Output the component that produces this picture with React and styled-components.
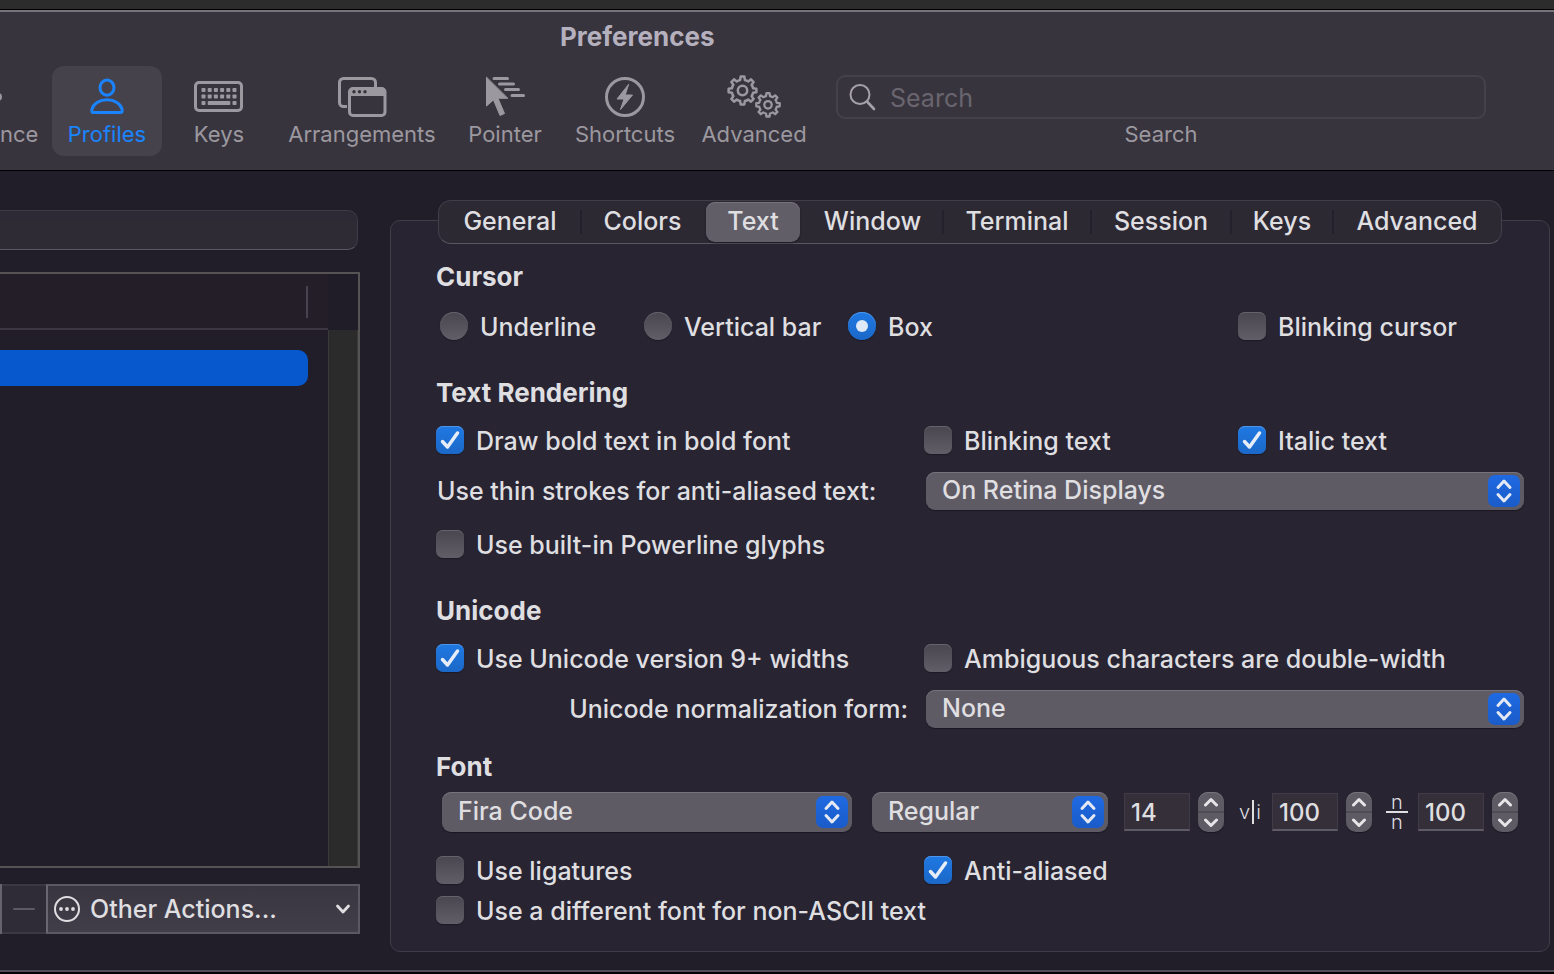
import React from "react";
import styled, { createGlobalStyle, css } from "styled-components";

const GlobalStyle = createGlobalStyle`
  *, *::before, *::after { box-sizing: border-box; }
  body {
    margin: 0;
    background: #000;
    color: #dfdee0;
    font-family: Inter, "Liberation Sans", sans-serif;
    font-size: 25px;
    font-weight: 500;
    line-height: 32px;
  }
  button, input, select { font: inherit; color: inherit; margin: 0; }
`;

/* ---------- window frame ---------- */

const Page = styled.div`
  display: flex;
  flex-direction: column;
  min-height: 100vh;
  overflow: hidden;
`;

const Backdrop = styled.div`
  height: 9px;
  background: #2c2c2c;
`;

const Window = styled.main`
  display: flex;
  flex-direction: column;
  flex: 1;
  margin: 1px 0 2px;
  border-top: 2px solid #77747b;
  border-bottom: 2px solid #4f4b58;
  background: #211d29;
`;

const Header = styled.header`
  height: 159px;
  border-bottom: 1px solid #000;
  background: #38343e;
`;

const Title = styled.h1`
  margin: 0;
  padding: 9px 0 0 560px;
  font-size: 26px;
  line-height: 32px;
  font-weight: 700;
  color: #b5b0bd;
`;

/* ---------- toolbar ---------- */

const Toolbar = styled.nav`
  display: flex;
  align-items: flex-start;
  margin-top: 13px;
`;

const ToolButton = styled.button`
  display: flex;
  flex-direction: column;
  align-items: center;
  flex: none;
  width: ${(p) => p.$width}px;
  height: 90px;
  padding: 7px 0 0;
  border: 0;
  border-radius: 12px;
  background: ${(p) => (p.$active ? "#46424c" : "transparent")};
  color: ${(p) => (p.$active ? "#1a84ff" : "#9c989f")};
  font-size: 22px;
  font-weight: 400;
  line-height: 28px;
  ${(p) =>
    p.$clipped &&
    css`
      align-items: flex-start;
    `}
`;

const ToolIcon = styled.svg`
  width: 56px;
  height: 48px;
  margin-bottom: -1px;
  fill: none;
  stroke: currentColor;
  stroke-width: 3;
  stroke-linecap: round;
  stroke-linejoin: round;
`;

const SearchTool = styled.label`
  display: flex;
  flex-direction: column;
  flex: 1;
  margin: 9px 68px 0 16px;
  font-size: 22px;
  font-weight: 400;
  line-height: 28px;
  text-align: center;
  color: #9c989f;
`;

const SearchBox = styled.span`
  display: flex;
  align-items: center;
  gap: 14px;
  height: 44px;
  margin-bottom: 1px;
  padding-left: 11px;
  border: 2px solid #45414b;
  border-radius: 9px;

  svg {
    flex: none;
    width: 27px;
    height: 28px;
    fill: none;
    stroke: #a5a1a8;
    stroke-width: 2;
    stroke-linecap: round;
  }
`;

const SearchInput = styled.input`
  flex: 1;
  min-width: 0;
  padding: 2px 0 0;
  border: 0;
  outline: 0;
  background: transparent;
  font-size: 25px;
  &::placeholder { color: #69656e; opacity: 1; }
`;

/* ---------- profile list ---------- */

const Body = styled.div`
  display: flex;
  flex: 1;
  gap: 30px;
  padding: 0 4px 18px 0;
`;

const Sidebar = styled.aside`
  display: flex;
  flex-direction: column;
  flex: none;
  width: 360px;
  padding: 39px 0 18px;
`;

const FilterInput = styled.input`
  width: 358px;
  height: 40px;
  padding: 0 12px;
  border: 1px solid #3d3945;
  border-left: 0;
  border-bottom-color: #5a5662;
  border-radius: 0 10px 10px 0;
  outline: 0;
  background: linear-gradient(#2c2835, #2f2b35 30%);
`;

const ProfileTable = styled.div`
  display: grid;
  grid-template: 56px 1fr / 1fr 30px;
  flex: 1;
  margin: 22px 0 16px;
  border: 2px solid #565354;
  border-left: 0;
`;

const ProfileHeader = styled.div`
  display: flex;
  justify-content: flex-end;
  padding: 12px 20px 10px 0;
  border-bottom: 2px solid #3b3641;
  background: #241e29;
`;

const ColumnHandle = styled.span`
  width: 2px;
  background: #48434e;
`;

const HeaderCorner = styled.div`
  background: #201d28;
`;

const ProfileRows = styled.div`
  padding: 20px 20px 0 0;
`;

const SelectedProfile = styled.div`
  height: 36px;
  border-radius: 0 10px 10px 0;
  background: #0758cd;
`;

const ScrollTrack = styled.div`
  border: 1px solid #3b3a3b;
  border-width: 0 1px;
  background: #2b2b2b;
`;

const ActionBar = styled.div`
  display: flex;
  height: 50px;
  border-left: 2px solid #67636c;
`;

const RemoveButton = styled.button`
  display: flex;
  align-items: center;
  justify-content: center;
  width: 44px;
  padding: 0;
  border: 2px solid #3b3743;
  border-width: 2px 0;
  background: #302c37;

  svg { width: 22px; height: 4px; stroke: #5d5963; stroke-width: 2; stroke-linecap: round; }
`;

const ActionsButton = styled.button`
  display: flex;
  align-items: center;
  gap: 9px;
  flex: 1;
  padding: 0 7px 0 5px;
  border: 2px solid #5c5863;
  border-left-color: #6b6771;
  background: linear-gradient(#3a3640, #423e49);

  span { flex: 1; text-align: left; }
  svg { flex: none; fill: none; stroke: currentColor; stroke-linecap: round; stroke-linejoin: round; }
`;

/* ---------- settings panel ---------- */

const Panel = styled.section`
  flex: 1;
  min-width: 0;
  margin-top: 49px;
  border: 1px solid #403c48;
  border-radius: 10px;
  background: #282431;
`;

const Tabs = styled.div`
  display: flex;
  height: 44px;
  margin: -21px 47px 0;
  padding: 1px 0;
  border: 1px solid #423e49;
  border-bottom-color: #5a5662;
  border-radius: 13px;
  background: #2d2933;
`;

const TabCell = styled.div`
  display: flex;
  flex: ${(p) => p.$share} 1 ${(p) => p.$share}px;
  align-items: center;
  padding: 0 2px;

  &::after {
    content: "";
    width: 2px;
    height: 24px;
    margin: 0 -3px 0 1px;
    background: ${(p) => (p.$divider ? "#25212c" : "transparent")};
  }
`;

const Tab = styled.button`
  flex: 1;
  height: 40px;
  padding: 0 0 2px;
  border: 0;
  border-radius: 9px;
  background: transparent;
  white-space: nowrap;
  ${(p) =>
    p.$active &&
    css`
      background: #625e68;
      box-shadow: inset 0 1px #77737b, 0 1px 2px #1b1823;
    `}
`;

const Form = styled.form`
  padding: 17px 25px 24px 45px;
`;

const Heading = styled.h2`
  margin: ${(p) => p.$top || 0}px 0 0;
  font-size: 26px;
  line-height: 32px;
  font-weight: 700;
`;

const Row = styled.div`
  display: grid;
  grid-template-columns: 488fr 314fr 286fr;
  margin-top: ${(p) => p.$top}px;
`;

const RadioGroup = styled.div`
  display: flex;
  grid-column: span 2;
  padding-left: 4px;
`;

const ChoiceLabel = styled.label`
  display: flex;
  align-items: center;
  gap: 12px;
  width: ${(p) => (p.$width ? p.$width + "px" : "auto")};
  white-space: nowrap;
  grid-column: ${(p) => p.$column || "auto"};
`;

const ChoiceMark = styled.span`
  display: grid;
  flex: none;
  width: 28px;
  height: 28px;
  margin-top: -2px;

  > * { grid-area: 1 / 1; }
  svg { width: 28px; height: 28px; pointer-events: none; }
`;

const ChoiceInput = styled.input`
  appearance: none;
  width: 28px;
  height: 28px;
  border-radius: ${(p) => (p.type === "radio" ? 14 : 7)}px;
  background: linear-gradient(#4a4650, #625e68);
  box-shadow: inset 0 1px #66626c, 0 1px 1px #1d1a25;

  & + svg { visibility: hidden; }
  &:checked {
    background: linear-gradient(#1f78e2, #1b68c8);
    box-shadow: inset 0 1px #4d95ea, 0 1px 1px #1d1a25;
  }
  &:checked + svg { visibility: visible; }
`;

const SelectRow = styled.div`
  display: grid;
  grid-template-columns: 490fr 598fr;
  align-items: center;
  margin-top: ${(p) => p.$top}px;
`;

const SelectLabel = styled.label`
  padding: 0 18px 0 1px;
  text-align: ${(p) => p.$align || "left"};
  white-space: nowrap;
`;

const SelectBox = styled.div`
  display: grid;
  flex: ${(p) => p.$share || 1} 1 0;
  align-items: center;

  > * { grid-area: 1 / 1; }
  svg { justify-self: end; margin-right: 4px; pointer-events: none; }
`;

const Select = styled.select`
  appearance: none;
  width: 100%;
  height: ${(p) => p.$height || 38}px;
  padding: 0 40px 2px 16px;
  border: 0;
  border-radius: 9px;
  background: #5f5b65;
  box-shadow: inset 0 1px #77737c, 0 1px 1px #1b1823;
`;

const FontRow = styled.div`
  display: flex;
  align-items: center;
  margin-top: 9px;
  padding: 0 6px;
`;

const SelectPair = styled.div`
  display: flex;
  flex: 1;
  gap: 20px;
  margin-right: 16px;
`;

const NumberInput = styled.input`
  width: 66px;
  height: 38px;
  padding: 2px 6px 0;
  border: 1px solid #403c47;
  border-bottom: 2px solid #5f5b66;
  border-radius: 0;
  outline: 0;
  background: #352f3a;
  font-size: 24px;
`;

const Stepper = styled.span`
  display: flex;
  flex-direction: column;
  width: 26px;
  height: 40px;
  margin-left: 8px;
  border-radius: 10px;
  overflow: hidden;
  background: #5f5b65;
  box-shadow: inset 0 1px #77737c, 0 1px 1px #1b1823;
`;

const StepButton = styled.button`
  display: flex;
  flex: 1;
  align-items: center;
  justify-content: center;
  padding: 0;
  border: 0;
  background: transparent;
  & + & { border-top: 2px solid #504c56; }

  svg { width: 16px; height: 10px; fill: none; stroke: #e6e5e7; stroke-width: 3; stroke-linecap: round; stroke-linejoin: round; }
`;

const SpacingMark = styled.span`
  display: flex;
  flex-direction: ${(p) => (p.$vertical ? "column" : "row")};
  align-items: center;
  justify-content: center;
  gap: ${(p) => (p.$vertical ? 0 : 2)}px;
  width: ${(p) => (p.$vertical ? 22 : 24)}px;
  margin: 0 10px 0 14px;
  font-size: 20px;
  line-height: ${(p) => (p.$vertical ? 18 : 24)}px;
  font-weight: 300;
`;

const SpacingRule = styled.i`
  flex: none;
  width: ${(p) => (p.$vertical ? 22 : 2)}px;
  height: ${(p) => (p.$vertical ? 2 : 24)}px;
  background: #dfdee0;
`;

/* ---------- drawings ---------- */

function gearPath(cx, cy, outer, inner, teeth) {
  const step = (Math.PI * 2) / teeth;
  const at = (r, a) => `${(cx + r * Math.cos(a)).toFixed(2)} ${(cy + r * Math.sin(a)).toFixed(2)}`;
  let d = "";
  for (let i = 0; i < teeth; i++) {
    const a = i * step - Math.PI / 2;
    d += `${i ? "L" : "M"}${at(inner, a - step * 0.28)}L${at(outer, a - step * 0.17)}`;
    d += `L${at(outer, a + step * 0.17)}L${at(inner, a + step * 0.28)}`;
    d += `A${inner} ${inner} 0 0 1 ${at(inner, a + step * 0.72)}`;
  }
  return d + "Z";
}

const EdgeIcon = () => (
  <ToolIcon viewBox="0 0 56 48"><circle cx="-2" cy="24" r="4" fill="currentColor" stroke="none" /></ToolIcon>
);

const ProfilesIcon = () => (
  <ToolIcon viewBox="0 0 56 48">
    <ellipse cx="28" cy="14.700" rx="7" ry="7.600" />
    <path d="M14.500 39.500c-1.600 0-2-1-1.600-3 1.200-6 7.600-9.700 15.100-9.700s13.900 3.700 15.100 9.700c.4 2 0 3-1.600 3z" />
  </ToolIcon>
);

const keyColumns = [9.5, 15.7, 21.900, 28.100, 34.300, 40.500];
const KeysIcon = () => (
  <ToolIcon viewBox="0 0 56 48">
    <rect x="4.500" y="9.500" width="46" height="28" rx="3.500" />
    <g fill="currentColor" stroke="none">
      {keyColumns.map((x) => <rect key={x} x={x + 1} y="15" width="4" height="4" rx=".8" />)}
      {keyColumns.map((x) => <rect key={x} x={x + 1} y="21.500" width="4" height="4" rx=".8" />)}
      <rect x="10.500" y="28" width="4" height="4" rx=".8" />
      <rect x="16.700" y="28" width="22.600" height="4" rx=".8" />
      <rect x="41.500" y="28" width="4" height="4" rx=".8" />
    </g>
  </ToolIcon>
);

const ArrangementsIcon = () => (
  <ToolIcon viewBox="0 0 56 48">
    <path d="M13 33.500H9.500a4 4 0 0 1-4-4V9.500a4 4 0 0 1 4-4h28a4 4 0 0 1 4 4V14" strokeLinecap="butt" />
    <rect x="15.500" y="15.500" width="35.500" height="27" rx="3.500" />
    <path d="M15.500 23v-4a4 4 0 0 1 4-4H47a4 4 0 0 1 4 4v4z" fill="currentColor" stroke="none" />
    <g fill="#38343e" stroke="none">
      <circle cx="20" cy="18.700" r="1.700" /><circle cx="25.500" cy="18.700" r="1.700" /><circle cx="31" cy="18.700" r="1.700" />
    </g>
  </ToolIcon>
);

const PointerIcon = () => (
  <ToolIcon viewBox="0 0 56 48">
    <path d="M9.500 4.500v28.500l7-6 6.500 15.500 4.500-2-6.500-15.200h9.500z" fill="currentColor" strokeWidth="1" />
    <path d="M17 5.500h13.500M22.500 11h14M28.500 16.500h13M35 22.500h11.500" strokeWidth="3" />
  </ToolIcon>
);

const ShortcutsIcon = () => (
  <ToolIcon viewBox="0 0 56 48">
    <circle cx="28" cy="24" r="18.500" />
    <path d="M31.500 11.500 20 26h7l-3.500 10.500L35.500 22h-7z" fill="currentColor" strokeWidth="1" />
  </ToolIcon>
);

const AdvancedIcon = () => (
  <ToolIcon viewBox="0 0 56 48">
    <path d={gearPath(16.500, 17.500, 14, 10.800, 8)} strokeWidth="2.500" />
    <circle cx="16.500" cy="17.500" r="4.700" strokeWidth="2.500" />
    <path d={gearPath(42, 31.800, 11.800, 9, 8)} strokeWidth="2.300" />
    <circle cx="42" cy="31.800" r="3.700" strokeWidth="2.300" />
  </ToolIcon>
);

const SelectArrows = () => (
  <svg width="32" height="32" viewBox="0 0 32 32" fill="none" strokeLinecap="round" strokeLinejoin="round">
    <defs>
      <linearGradient id="arrowFill" x1="0" y1="0" x2="0" y2="1">
        <stop offset="0" stopColor="#1f6ae2" />
        <stop offset="1" stopColor="#1a5bc8" />
      </linearGradient>
    </defs>
    <rect width="32" height="32" rx="7" fill="url(#arrowFill)" />
    <path d="M10 12.500 16 6l6 6.500M10 19.500l6 6.500 6-6.500" stroke="#e4e9f4" strokeWidth="3" />
  </svg>
);

const tools = [
  { label: "Profiles", width: 110, icon: ProfilesIcon, active: true },
  { label: "Keys", width: 114, icon: KeysIcon },
  { label: "Arrangements", width: 172, icon: ArrangementsIcon },
  { label: "Pointer", width: 114, icon: PointerIcon },
  { label: "Shortcuts", width: 126, icon: ShortcutsIcon },
  { label: "Advanced", width: 132, icon: AdvancedIcon },
];

const tabs = [
  { label: "General", share: 142, divider: true },
  { label: "Colors", share: 123 },
  { label: "Text", share: 98, active: true },
  { label: "Window", share: 141, divider: true },
  { label: "Terminal", share: 148, divider: true },
  { label: "Session", share: 140, divider: true },
  { label: "Keys", share: 102, divider: true },
  { label: "Advanced", share: 168 },
];

/* ---------- controls ---------- */

function Check({ children, checked, column }) {
  return (
    <ChoiceLabel $column={column}>
      <ChoiceMark>
        <ChoiceInput type="checkbox" defaultChecked={checked} />
        <svg viewBox="0 0 28 28" fill="none" stroke="#e6edf8" strokeWidth="3.500" strokeLinecap="round" strokeLinejoin="round">
          <path d="M6.500 15.500 11.500 21 21.500 7" />
        </svg>
      </ChoiceMark>
      {children}
    </ChoiceLabel>
  );
}

function Radio({ children, checked }) {
  return (
    <ChoiceLabel $width={204}>
      <ChoiceMark>
        <ChoiceInput type="radio" name="cursor" defaultChecked={checked} />
        <svg viewBox="0 0 28 28"><circle cx="14" cy="14" r="6" fill="#dfe8f7" /></svg>
      </ChoiceMark>
      {children}
    </ChoiceLabel>
  );
}

function PopUp({ id, value, share, height, label }) {
  return (
    <SelectBox $share={share}>
      <Select id={id} aria-label={label} $height={height} defaultValue={value}>
        <option>{value}</option>
      </Select>
      <SelectArrows />
    </SelectBox>
  );
}

function NumberField({ label, value }) {
  return (
    <>
      <NumberInput type="text" inputMode="numeric" aria-label={label} defaultValue={value} />
      <Stepper>
        <StepButton type="button" aria-label={`Increase ${label}`}>
          <svg viewBox="0 0 16 10"><path d="M2.500 8 8 2.500 13.500 8" /></svg>
        </StepButton>
        <StepButton type="button" aria-label={`Decrease ${label}`}>
          <svg viewBox="0 0 16 10"><path d="M2.500 2 8 7.500 13.500 2" /></svg>
        </StepButton>
      </Stepper>
    </>
  );
}

export default function App() {
  return (
    <Page>
      <GlobalStyle />
      <Backdrop />
      <Window>
        <Header>
          <Title>Preferences</Title>
          <Toolbar>
            <ToolButton type="button" $width={52} $clipped><EdgeIcon />nce</ToolButton>
            {tools.map(({ label, width, icon: Icon, active }) => (
              <ToolButton key={label} type="button" $width={width} $active={active}>
                <Icon />
                {label}
              </ToolButton>
            ))}
            <SearchTool>
              <SearchBox>
                <svg viewBox="0 0 27 28"><circle cx="11" cy="11.500" r="9.500" /><path d="m18 18.500 7 7.500" strokeWidth="2.600" /></svg>
                <SearchInput type="text" placeholder="Search" />
              </SearchBox>
              Search
            </SearchTool>
          </Toolbar>
        </Header>

        <Body>
          <Sidebar>
            <FilterInput type="text" aria-label="Filter profiles" />
            <ProfileTable>
              <ProfileHeader><ColumnHandle /></ProfileHeader>
              <HeaderCorner />
              <ProfileRows><SelectedProfile /></ProfileRows>
              <ScrollTrack />
            </ProfileTable>
            <ActionBar>
              <RemoveButton type="button" aria-label="Remove profile">
                <svg viewBox="0 0 22 4"><path d="M1 2h20" /></svg>
              </RemoveButton>
              <ActionsButton type="button">
                <svg width="28" height="28" viewBox="0 0 28 28">
                  <circle cx="14" cy="14" r="12" strokeWidth="2" />
                  <g fill="currentColor" stroke="none">
                    <circle cx="8" cy="14" r="1.900" /><circle cx="14" cy="14" r="1.900" /><circle cx="20" cy="14" r="1.900" />
                  </g>
                </svg>
                <span>Other Actions...</span>
                <svg width="16" height="12" viewBox="0 0 16 12" strokeWidth="2.800"><path d="M2.500 3 8 9l5.500-6" /></svg>
              </ActionsButton>
            </ActionBar>
          </Sidebar>

          <Panel>
            <Tabs role="tablist">
              {tabs.map(({ label, share, divider, active }) => (
                <TabCell key={label} $share={share} $divider={divider}>
                  <Tab type="button" role="tab" aria-selected={!!active} $active={active}>{label}</Tab>
                </TabCell>
              ))}
            </Tabs>
            <Form>
              <Heading>Cursor</Heading>
              <Row $top={18}>
                <RadioGroup>
                  <Radio>Underline</Radio>
                  <Radio>Vertical bar</Radio>
                  <Radio checked>Box</Radio>
                </RadioGroup>
                <Check>Blinking cursor</Check>
              </Row>

              <Heading $top={34}>Text Rendering</Heading>
              <Row $top={16}>
                <Check checked>Draw bold text in bold font</Check>
                <Check>Blinking text</Check>
                <Check checked>Italic text</Check>
              </Row>
              <SelectRow $top={15}>
                <SelectLabel htmlFor="thin-strokes">Use thin strokes for anti-aliased text:</SelectLabel>
                <PopUp id="thin-strokes" value="On Retina Displays" />
              </SelectRow>
              <Row $top={19}>
                <Check>Use built-in Powerline glyphs</Check>
              </Row>

              <Heading $top={34}>Unicode</Heading>
              <Row $top={16}>
                <Check checked>Use Unicode version 9+ widths</Check>
                <Check column="span 2">Ambiguous characters are double-width</Check>
              </Row>
              <SelectRow $top={15}>
                <SelectLabel htmlFor="normalization" $align="right">Unicode normalization form:</SelectLabel>
                <PopUp id="normalization" value="None" />
              </SelectRow>

              <Heading $top={23}>Font</Heading>
              <FontRow>
                <SelectPair>
                  <PopUp label="Font family" value="Fira Code" share={410} height={40} />
                  <PopUp label="Font style" value="Regular" share={236} height={40} />
                </SelectPair>
                <NumberField label="font size" value="14" />
                <SpacingMark>v<SpacingRule />i</SpacingMark>
                <NumberField label="horizontal spacing" value="100" />
                <SpacingMark $vertical>
                  <span>n</span>
                  <SpacingRule $vertical />
                  <span>n</span>
                </SpacingMark>
                <NumberField label="vertical spacing" value="100" />
              </FontRow>
              <Row $top={23}>
                <Check>Use ligatures</Check>
                <Check checked>Anti-aliased</Check>
              </Row>
              <Row $top={8}>
                <Check column="span 2">Use a different font for non-ASCII text</Check>
              </Row>
            </Form>
          </Panel>
        </Body>
      </Window>
    </Page>
  );
}
